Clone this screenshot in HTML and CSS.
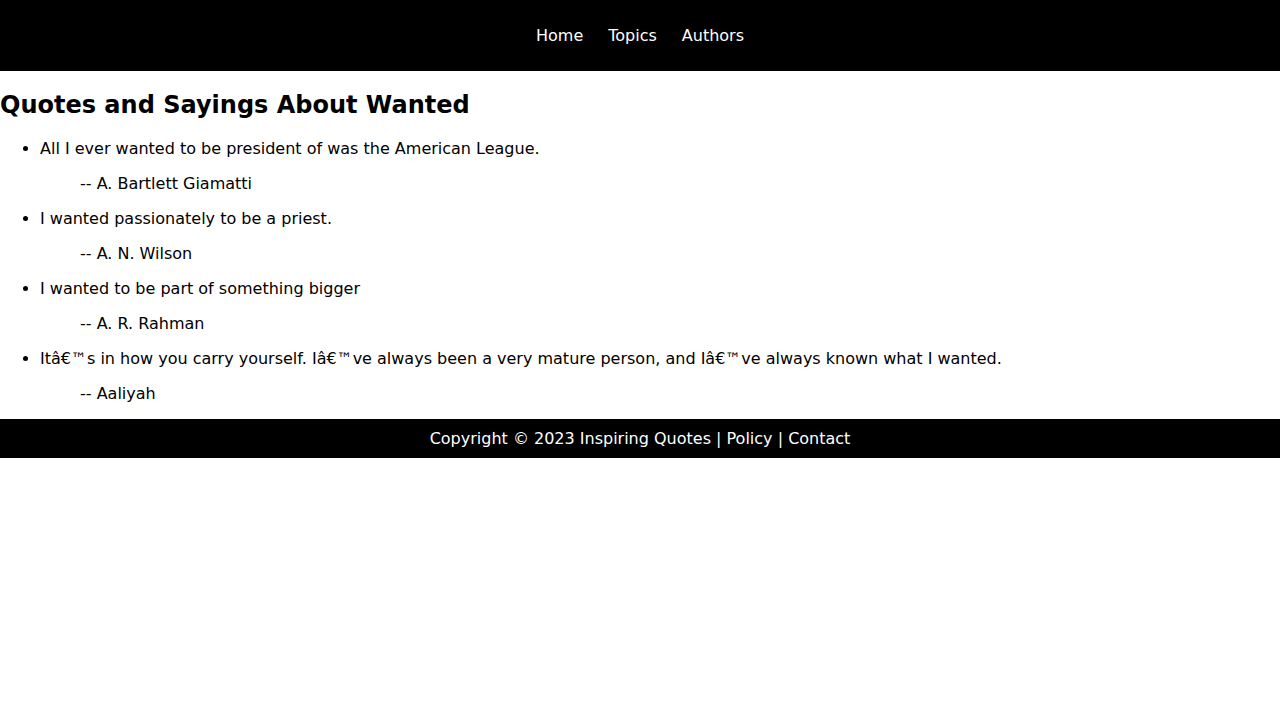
FILE: index.html
```html
<!DOCTYPE html>
<html lang="en">
<head>
<meta charset="utf-8">
<title>Quotes and Sayings About Wanted</title>
<link rel="stylesheet" href="styles.css">
</head>
<body>
<header class="site-header">
  <nav class="nav">
    <a href="#">Home</a>
    <a href="#">Topics</a>
    <a href="#">Authors</a>
  </nav>
</header>
<main class="content">
  <h1 class="title">Quotes and Sayings About Wanted</h1>
  <ul class="quotes">
    <li>
      <p class="quote">All I ever wanted to be president of was the American League.</p>
      <p class="author">-- A. Bartlett Giamatti</p>
    </li>
    <li>
      <p class="quote">I wanted passionately to be a priest.</p>
      <p class="author">-- A. N. Wilson</p>
    </li>
    <li>
      <p class="quote">I wanted to be part of something bigger</p>
      <p class="author">-- A. R. Rahman</p>
    </li>
    <li>
      <p class="quote">Itâ€™s in how you carry yourself. Iâ€™ve always been a very mature person, and Iâ€™ve always known what I wanted.</p>
      <p class="author">-- Aaliyah</p>
    </li>
  </ul>
</main>
<footer class="site-footer">
  Copyright © 2023 Inspiring Quotes | <a href="#">Policy</a> | <a href="#">Contact</a>
</footer>
</body>
</html>
```

FILE: styles.css
```css
html, body {
  margin: 0;
  padding: 0;
  background: #fff;
}
body {
  font-family: "DejaVu Sans", sans-serif;
  font-size: 16px;
  color: #000;
}
a {
  color: inherit;
  text-decoration: none;
}
.site-header {
  background: #000;
  color: #fff;
  padding: 26px 0;
}
.nav {
  display: flex;
  justify-content: center;
  gap: 25px;
}
.content {
  display: flow-root;
}
.title {
  font-size: 24px;
  font-weight: bold;
  margin: 20px 0;
}
.quotes {
  margin: 16px 0;
  padding-left: 40px;
}
.quote {
  margin: 16px 0;
}
.author {
  margin: 16px 0 16px 40px;
}
.site-footer {
  background: #000;
  color: #fff;
  text-align: center;
  padding: 10px 0;
}
```
